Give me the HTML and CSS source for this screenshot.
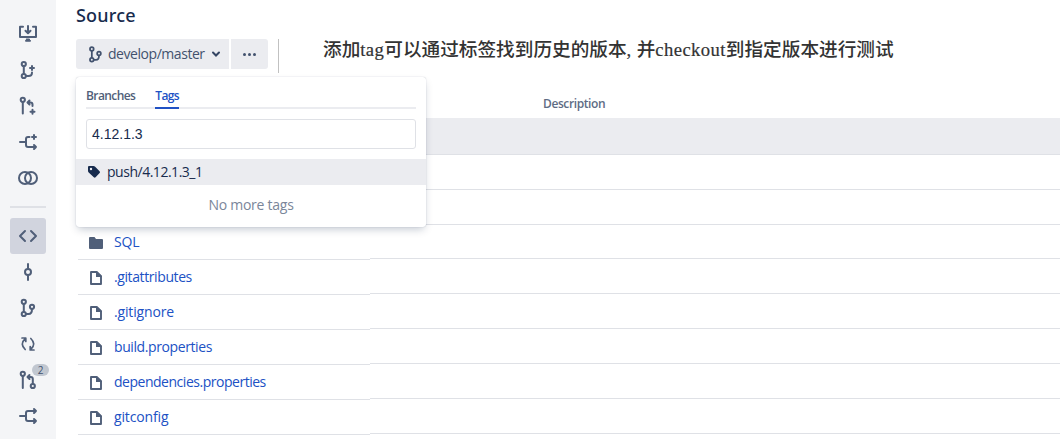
FILE: index.html
```html
<!DOCTYPE html>
<html lang="zh-CN">
<head>
<meta charset="utf-8">
<title>Source</title>
<link rel="stylesheet" href="styles.css">
</head>
<body>
<svg class="defs" width="0" height="0">
  <symbol id="file" viewBox="0 0 14 16"><path d="M2 2h5.600L12 6.200V14H2z" fill="none" stroke="currentColor" stroke-width="1.900" stroke-linejoin="round"/><path d="M7 1.500h1.300L12.800 6v1H7z" fill="currentColor"/></symbol>
  <symbol id="branch" viewBox="0 0 24 24"><g fill="none" stroke="currentColor" stroke-width="2"><circle cx="7.800" cy="5.800" r="2.100"/><circle cx="7.800" cy="18" r="2.100"/><circle cx="16" cy="10.800" r="2.100"/><path d="M7.800 8v8M10 18h2.500q3.500 0 3.500-5"/></g></symbol>
</svg>
<div class="app">
  <nav class="sidebar">
    <a class="item"><svg viewBox="0 0 24 24"><path d="M7 4.700H4V15h16V4.700h-3M12 4v7M9.500 8.800 12 11.300l2.500-2.500"/><path d="M10.500 17h3v1.500h1v.700h-5v-.700h1z" fill="currentColor" stroke-width="1"/></svg></a>
    <a class="item"><svg viewBox="0 0 24 24"><circle cx="7.800" cy="6" r="2.100"/><circle cx="7.800" cy="18" r="2.100"/><path d="M7.800 8v8M10 18h2.500q3.500 0 3.500-3.500M16 8v4M14 10h4"/></svg></a>
    <a class="item"><svg viewBox="0 0 24 24"><circle cx="6.800" cy="5.800" r="2.100"/><path d="M6.800 8v11.500M12 8.500h2.500q2 0 2 2V12M13.500 6.500l-2 2 2 2M16.500 15.800v4M14.500 17.800h4"/></svg></a>
    <a class="item"><svg viewBox="0 0 24 24"><path d="M4 12h6M13.500 7H12q-2 0-2 2v6q0 2 2 2h8M18 5v4M16 7h4M18 15l2 2-2 2"/></svg></a>
    <a class="item"><svg viewBox="0 0 24 24"><circle cx="9" cy="12" r="6"/><circle cx="15" cy="12" r="6"/></svg></a>
    <hr class="rule">
    <a class="item active"><svg viewBox="0 0 24 24"><path d="M9 7 4 12l5 5M15 7l5 5-5 5"/></svg></a>
    <a class="item"><svg viewBox="0 0 24 24"><circle cx="12" cy="12" r="3"/><path d="M12 4v5M12 15v5"/></svg></a>
    <a class="item"><svg><use href="#branch"/></svg></a>
    <a class="item"><svg class="sync" viewBox="0 0 24 24"><path d="M9.200 17.500Q3.500 12 9 7M6 6h3.800v3.500M14.800 6.500Q20.500 12 15 17M18 18h-3.800v-3.500"/></svg></a>
    <a class="item"><svg viewBox="0 0 24 24"><circle cx="6.800" cy="5.800" r="2.100"/><circle cx="16.800" cy="18" r="2.100"/><path d="M6.800 8v12M12 9h2.800q2 0 2 2v5M13.500 7l-2 2 2 2"/></svg><span class="badge">2</span></a>
    <a class="item"><svg viewBox="0 0 24 24"><path d="M4 12h6M20 7h-8q-2 0-2 2v6q0 2 2 2h8M18 5l2 2-2 2M18 15l2 2-2 2"/></svg></a>
  </nav>
  <main class="main">
    <h1 class="title">Source</h1>
    <div class="toolbar">
      <div class="selector"><svg class="branch-icon"><use href="#branch"/></svg><span class="ref">develop/master</span><svg class="chevron" viewBox="0 0 10 8"><path d="M2 2.500 5 5.500 8 2.500"/></svg></div>
      <div class="more"><i></i><i></i><i></i></div>
      <div class="divider"></div>
      <p class="note">添加<span class="latin">tag</span>可以通过标签找到历史的版本<span class="comma">, </span>并<span class="latin">checkout</span>到指定版本进行测试</p>
    </div>
    <div class="table">
      <div class="names">
        <div class="row"><svg class="folder" viewBox="0 0 14 12"><path d="M1 0h4.500L7 2h6q1 0 1 1v8q0 1-1 1H1q-1 0-1-1V1q0-1 1-1z"/></svg><a>SQL</a></div>
        <div class="row"><svg class="file"><use href="#file"/></svg><a class="tight">.gitattributes</a></div>
        <div class="row"><svg class="file"><use href="#file"/></svg><a>.gitignore</a></div>
        <div class="row"><svg class="file"><use href="#file"/></svg><a class="tight">build.properties</a></div>
        <div class="row"><svg class="file"><use href="#file"/></svg><a class="tighter">dependencies.properties</a></div>
        <div class="row"><svg class="file"><use href="#file"/></svg><a>gitconfig</a></div>
      </div>
      <div class="details">
        <div class="head"><span>Description</span></div>
        <div class="line current"></div><div class="line"></div><div class="line"></div><div class="line short"></div><div class="line"></div><div class="line"></div><div class="line"></div><div class="line"></div><div class="line"></div>
      </div>
    </div>
    <section class="popup">
      <div class="tabs"><span class="tab">Branches</span><span class="tab selected">Tags</span></div>
      <div class="search">4.12.1.3</div>
      <div class="option"><svg viewBox="0 0 14 14"><path fill-rule="evenodd" d="M1 2q0-1 1-1h4.500q.8 0 1.400.6l4.700 4.700q.9.900 0 1.800l-4 4.200q-.9.900-1.800 0L1.700 7.500Q1 6.800 1 6zM4 2.800a1.200 1.200 0 1 0 0 2.400 1.200 1.200 0 0 0 0-2.400z"/></svg><span>push/4.12.1.3_1</span></div>
      <div class="empty">No more tags</div>
    </section>
  </main>
</div>
</body>
</html>
```

FILE: styles.css
```css
* { box-sizing: border-box; }
body { margin: 0; background: #fff; color: #172b4d; font: 14px/20px "Open Sans", "Noto Sans", sans-serif; overflow: hidden; }
.defs { position: absolute; }
.app { display: flex; width: 1060px; height: 439px; overflow: hidden; }
.sidebar { display: flex; flex: none; flex-direction: column; align-items: center; width: 56px; padding-top: 16px; background: #f4f5f7; }
.item { position: relative; display: flex; flex: none; align-items: center; justify-content: center; width: 36px; height: 36px; color: #505f79; }
.item svg { width: 24px; height: 24px; fill: none; stroke: currentColor; stroke-width: 2; stroke-linecap: round; stroke-linejoin: round; }
.item .sync { stroke-width: 1.7; }
.active { border-radius: 3px; background: #d1d4de; }
.rule { flex: none; width: 36px; height: 2px; margin: 10px 0; border: 0; background: #dfe1e6; }
.badge { position: absolute; top: 2px; left: 22px; width: 17px; height: 12px; border-radius: 6px; background: #c1c7d0; color: #42526e; font-size: 10px; line-height: 12px; text-align: center; }
.main { position: relative; flex: 1; display: flex; flex-direction: column; padding-left: 20px; }
.title { margin: 0; padding-top: 3px; height: 39px; font-family: "Noto Sans", "Open Sans", sans-serif; font-size: 18px; font-weight: 500; line-height: 24px; letter-spacing: .2px; }
.toolbar { display: flex; flex: none; height: 35px; }
.selector, .more { display: flex; align-items: center; height: 30px; background: #ebecf0; color: #42526e; }
.selector { width: 153px; padding-left: 9px; border-radius: 3px 0 0 3px; }
.branch-icon { flex: none; width: 21px; height: 21px; }
.ref { width: 98px; margin-left: 2px; letter-spacing: -.45px; white-space: nowrap; }
.chevron { width: 10px; height: 8px; margin-left: 5px; fill: none; stroke: #344563; stroke-width: 2; stroke-linecap: round; }
.more { justify-content: center; gap: 2px; width: 37px; margin-left: 2px; border-radius: 0 3px 3px 0; }
.more i { width: 3px; height: 3px; border-radius: 50%; background: #42526e; }
.divider { width: 1px; height: 34px; margin-left: 10px; background: #c1c1c1; }
.note { margin: -2px 0 0 44px; color: #333; font-family: "Noto Sans CJK SC", "Noto Sans CJK JP", sans-serif; font-size: 18.65px; font-weight: 500; line-height: 22px; white-space: nowrap; }
.latin, .comma { font-family: "Liberation Serif", "Noto Sans CJK SC", serif; letter-spacing: .4px; -webkit-text-stroke: .2px #333; }
.table { display: flex; flex: none; height: 365px; }
.names { width: 294px; padding: 151px 0 0 2px; }
.row { display: flex; align-items: center; height: 35px; border-bottom: 1px solid #dfe1e6; color: #505f79; }
.row a { color: #2051c4; letter-spacing: -.15px; }
.row .tight { letter-spacing: -.4px; }
.row .tighter { letter-spacing: -.48px; }
.row .file { width: 14px; height: 16px; margin: 2px 11px 0; }
.row .folder { width: 14px; height: 12px; margin: 1px 11px 0; fill: #505f79; }
.details { flex: 1; }
.head { height: 44px; padding: 20px 0 0 173px; color: #5e6c84; font-size: 12px; font-weight: 600; line-height: 20px; letter-spacing: -.4px; }
.line { height: 35px; border-bottom: 1px solid #dfe1e6; }
.current { height: 37px; background: #ebecf0; }
.short { height: 34px; }
.popup { position: absolute; top: 77px; left: 20px; width: 350px; height: 150px; border-radius: 3px; background: #fff; box-shadow: 0 4px 8px -2px rgba(9,30,66,.25), 0 0 1px rgba(9,30,66,.31); }
.tabs { display: flex; gap: 20px; height: 32px; margin: 0 10px; padding-top: 9px; border-bottom: 2px solid #ebecf0; color: #505f79; font-size: 12px; font-weight: 600; letter-spacing: -.6px; }
.tab { height: 23px; }
.selected { border-bottom: 2px solid #2051c4; color: #2051c4; }
.search { height: 30px; margin: 10px 10px 0; padding: 0 5px; border: 1px solid #dfe1e6; border-radius: 3px; font-family: "Liberation Sans", Arial, sans-serif; line-height: 28px; }
.option { display: flex; align-items: center; height: 26px; margin-top: 10px; padding-left: 11px; background: #ebecf0; }
.option svg { width: 14px; height: 14px; fill: #172b4d; }
.option span { margin-left: 6px; letter-spacing: -.48px; }
.empty { padding-top: 10px; color: #7a869a; letter-spacing: -.25px; text-align: center; }
```
